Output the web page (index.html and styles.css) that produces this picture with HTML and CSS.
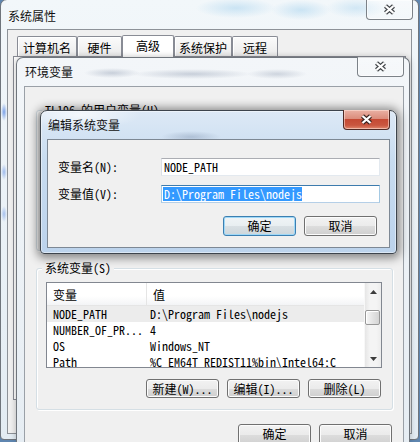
FILE: index.html
```html
<!DOCTYPE html>
<html lang="zh-CN">
<head>
<meta charset="utf-8">
<title>编辑系统变量</title>
<link rel="stylesheet" href="styles.css">
</head>
<body>
<div class="win outer">
  <div class="titlebar tb-outer"><span class="title">系统属性</span></div>
  <div class="close close-outer"><svg width="13" height="11" viewBox="0 0 13 11"><path d="M2.5 2L10.5 9M10.5 2L2.5 9" stroke="#404448" stroke-width="4.4"/><path d="M2.5 2L10.5 9M10.5 2L2.5 9" stroke="#fff" stroke-width="2.3"/></svg></div>
  <div class="oclient">
    <div class="tabs">
      <div class="tab w1">计算机名</div>
      <div class="tab w2">硬件</div>
      <div class="tab w3 sel">高级</div>
      <div class="tab w4">系统保护</div>
      <div class="tab w5">远程</div>
    </div>
    <div class="tabpanel"></div>
  </div>
</div>

<div class="win env">
  <div class="titlebar"><span class="title">环境变量</span></div>
  <div class="close close-env"><svg width="13" height="11" viewBox="0 0 13 11"><path d="M2.5 2L10.5 9M10.5 2L2.5 9" stroke="#404448" stroke-width="4.4"/><path d="M2.5 2L10.5 9M10.5 2L2.5 9" stroke="#fff" stroke-width="2.3"/></svg></div>
  <div class="eclient">
    <div class="group user">
      <span class="legend">TL196 的用户变量(U)</span>
    </div>
    <div class="group sys">
      <span class="legend">系统变量(S)</span>
      <div class="listview">
        <div class="lv-main">
          <div class="lv-head"><div class="h1">变量</div><div class="h2">值</div></div>
          <div class="lv-row sel"><div class="c1">NODE_PATH</div><div class="c2">D:\Program Files\nodejs</div></div>
          <div class="lv-row"><div class="c1">NUMBER_OF_PR...</div><div class="c2">4</div></div>
          <div class="lv-row"><div class="c1">OS</div><div class="c2">Windows_NT</div></div>
          <div class="lv-row"><div class="c1">Path</div><div class="c2">%C_EM64T_REDIST11%bin\Intel64;C</div></div>
        </div>
        <div class="vscroll">
          <div class="sb-btn"><svg width="7" height="4" viewBox="0 0 7 4"><path d="M3.5 0L7 4H0Z" fill="#3c3c3c"/></svg></div>
          <div class="sb-track"><div class="sb-thumb"></div></div>
          <div class="sb-btn"><svg width="7" height="4" viewBox="0 0 7 4"><path d="M0 0H7L3.5 4Z" fill="#3c3c3c"/></svg></div>
        </div>
      </div>
      <div class="btnrow">
        <div class="btn">新建(W)...</div>
        <div class="btn">编辑(I)...</div>
        <div class="btn">删除(L)</div>
      </div>
    </div>
    <div class="btnrow bottom">
      <div class="btn">确定</div>
      <div class="btn">取消</div>
    </div>
  </div>
</div>

<div class="win edit">
  <div class="titlebar"><span class="title">编辑系统变量</span></div>
  <div class="close close-red"><svg width="13" height="11" viewBox="0 0 13 11"><path d="M2.5 2L10.5 9M10.5 2L2.5 9" stroke="#3a2420" stroke-width="4.4"/><path d="M2.5 2L10.5 9M10.5 2L2.5 9" stroke="#fff" stroke-width="2.3"/></svg></div>
  <div class="dclient">
    <div class="form">
      <label class="lbl">变量名(N):</label>
      <div class="input">NODE_PATH</div>
      <label class="lbl">变量值(V):</label>
      <div class="input focus"><span class="selected">D:\Program Files\nodejs</span></div>
    </div>
    <div class="btnrow dlg">
      <div class="btn default">确定</div>
      <div class="btn">取消</div>
    </div>
  </div>
</div>
</body>
</html>
```

FILE: styles.css
```css
* { box-sizing: border-box; margin: 0; padding: 0; }
html, body { width: 420px; height: 442px; overflow: hidden; }
body {
  position: relative;
  background: #5f86b0;
  font-family: "Noto Sans Mono CJK SC", "Noto Sans CJK SC", "Liberation Mono", monospace;
  font-size: 12px;
  color: #000;
}

.win {
  position: absolute;
  border: 1px solid #6f757c;
  border-radius: 7px 7px 4px 4px;
}
.titlebar {
  height: 28px;
  padding-left: 1px;
  display: flex;
  align-items: center;
}
.title {
  font-family: "Noto Sans CJK SC", sans-serif;
  font-size: 12px;
  line-height: 14px;
  color: #111;
}

/* close buttons */
.close {
  position: absolute;
  top: -1px;
  width: 47px;
  height: 20px;
  border: 1px solid #7c8288;
  border-top: none;
  border-radius: 0 0 4px 4px;
  display: flex;
  align-items: center;
  justify-content: center;
  background: linear-gradient(rgba(255,255,255,.35), rgba(255,255,255,.15));
  box-shadow: inset 0 0 0 1px rgba(255,255,255,.6);
}
.close-outer { right: 5px; top: 0; }
.close-env { right: 5px; }
.close-red {
  right: 6px;
  border-color: #4f2a25;
  background: linear-gradient(#eab1a4 0%, #db8d7c 45%, #c54a34 50%, #c9563f 80%, #e0876d 100%);
  box-shadow: inset 0 0 0 1px rgba(255,230,220,.55);
}

/* outer window: 系统属性 */
.outer {
  left: 0; top: -1px; width: 419px; height: 441px;
  padding: 0 6px;
  background:
    radial-gradient(ellipse 3px 9px at 3px 112px, rgba(80,130,225,.75), transparent),
    radial-gradient(ellipse 3px 8px at 3px 172px, rgba(80,130,225,.5), transparent),
    radial-gradient(ellipse 3px 8px at 3px 214px, rgba(80,130,225,.45), transparent),
    radial-gradient(ellipse 40px 10px at 235px 8px, rgba(170,212,238,.55), transparent),
    radial-gradient(ellipse 30px 10px at 300px 10px, rgba(170,212,238,.55), transparent),
    radial-gradient(ellipse 30px 10px at 355px 8px, rgba(170,212,238,.45), transparent),
    linear-gradient(#f2f7fa, #e3ecf3);
}
.tb-outer { height: 29px; padding-top: 2px; }
.oclient {
  height: 405px;
  border: 1px solid #8d9298;
  background: #f0f0f0;
}
.tabs {
  height: 26px;
  margin-left: 9px;
  display: flex;
  align-items: flex-end;
}
.tab {
  height: 20px;
  border: 1px solid #898c95;
  border-bottom: none;
  border-radius: 2px 2px 0 0;
  background: linear-gradient(#fbfbfb, #ebebeb);
  box-shadow: inset 1px 1px 0 #fff;
  font-family: "Noto Sans CJK SC", sans-serif;
  font-size: 12px;
  line-height: 14px;
  padding-top: 4px;
  text-align: center;
}
.tab.sel { height: 22px; background: #fff; padding-top: 3px; margin-bottom: -1px; position: relative; }
.w1 { width: 60px; }
.w2 { width: 45px; }
.w3 { width: 52px; }
.w4 { width: 58px; }
.w5 { width: 46px; }
.tabpanel {
  margin: 0 5px;
  height: 344px;
  border: 1px solid #898c95;
  background: #fff;
}

/* env window: 环境变量 */
.env {
  left: 16px; top: 57px; width: 394px; height: 385px;
  border-radius: 7px 7px 0 0;
  border-bottom: none;
  padding: 0 5px 0 7px;
  background:
    radial-gradient(ellipse 28px 5px at 95px 15px, rgba(120,135,160,.35), transparent),
    radial-gradient(ellipse 60px 5px at 175px 16px, rgba(120,135,160,.35), transparent),
    radial-gradient(ellipse 30px 5px at 260px 16px, rgba(120,135,160,.3), transparent),
    linear-gradient(#f3f6f9, #e6edf3);
  box-shadow: 0 0 6px rgba(0,0,0,.25);
}
.eclient {
  height: 356px;
  border: 1px solid #9aa0a7;
  border-bottom: none;
  background: #f0f0f0;
  padding-left: 11px;
  overflow: hidden;
}
.group {
  position: relative;
  width: 357px;
  border: 1px solid #d5dfe5;
  border-radius: 3px;
  box-shadow: inset 1px 1px 0 #fff, 1px 1px 0 #fff;
}
.legend {
  position: absolute;
  top: -8px;
  left: 5px;
  padding: 0 3px;
  background: #f0f0f0;
  line-height: 14px;
  white-space: nowrap;
}
.user { margin-top: 23px; height: 141px; }
.sys { margin-top: 17px; height: 142px; padding: 13px 0 0 9px; }

.listview {
  width: 336px;
  height: 86px;
  border: 1px solid #828790;
  background: #fff;
  display: flex;
  overflow: hidden;
}
.lv-main { flex: 1; overflow: hidden; }
.lv-head {
  height: 23px;
  display: grid;
  grid-template-columns: 100px 1fr;
  background: linear-gradient(#fff 0%, #fff 60%, #f3f4f6 100%);
  border-bottom: 1px solid #e5e5e5;
}
.h1, .h2 { padding-top: 5px; line-height: 14px; }
.h1 { padding-left: 6px; border-right: 1px solid #e5e5e5; }
.h2 { padding-left: 6px; }
.lv-row {
  height: 16px;
  display: grid;
  grid-template-columns: 100px 1fr;
  line-height: 16px;
  white-space: nowrap;
}
.lv-row.sel { background: #ececec; }
.c1 { padding-left: 6px; overflow: hidden; }
.c2 { padding-left: 3px; overflow: hidden; }

.vscroll {
  width: 17px;
  display: flex;
  flex-direction: column;
  background: linear-gradient(90deg, #e6e6e6, #f4f4f4 30%, #f4f4f4 70%, #ececec);
  border-left: 1px solid #f8f8f8;
}
.sb-btn { height: 17px; display: flex; align-items: center; justify-content: center; }
.sb-track { flex: 1; padding-top: 10px; }
.sb-thumb {
  width: 15px;
  height: 15px;
  border: 1px solid #979797;
  border-radius: 2px;
  background: linear-gradient(90deg, #f6f6f6, #e4e4e4 50%, #d4d4d4);
  box-shadow: inset 1px 1px 0 #fff;
}

.btnrow {
  display: flex;
  justify-content: flex-end;
  gap: 8px;
}
.sys .btnrow { width: 335px; margin-top: 11px; }
.bottom { width: 356px; margin-top: 14px; }
.btn {
  width: 73px;
  height: 19px;
  border: 1px solid #707070;
  border-radius: 3px;
  background: linear-gradient(#f2f2f2 0%, #ebebeb 50%, #dddddd 50%, #cfcfcf 100%);
  box-shadow: inset 0 0 0 1px #fcfcfc;
  text-align: center;
  line-height: 17px;
  white-space: nowrap;
}
.bottom .btn { height: 22px; }

/* edit dialog: 编辑系统变量 */
.edit {
  left: 40px; top: 110px; width: 357px; height: 144px;
  padding: 0 6px;
  border-color: #3d444c;
  background:
    radial-gradient(ellipse 30px 6px at 150px 26px, rgba(110,130,160,.35), transparent),
    radial-gradient(ellipse 60px 14px at 40px 4px, rgba(255,255,255,.7), transparent),
    linear-gradient(#dde9f6 0%, #c8dcf0 35%, #bcd3ec 100%);
  box-shadow: 0 1px 10px 3px rgba(0,0,0,.45), inset 0 0 0 1px rgba(255,255,255,.45);
}
.dclient {
  height: 109px;
  border: 1px solid #7d8894;
  background: #f0f0f0;
}
.form {
  display: grid;
  grid-template-columns: 103px 219px;
  row-gap: 9px;
  padding: 18px 0 0 10px;
  align-items: center;
}
.lbl { line-height: 14px; }
.input {
  height: 18px;
  border: 1px solid #e3e9ef;
  border-top-color: #abadb3;
  border-left-color: #dbdfe6;
  background: #fff;
  padding-left: 2px;
  line-height: 16px;
  white-space: nowrap;
}
.input.focus {
  border-color: #b5cfe7;
  border-top-color: #3d7bad;
  border-left-color: #a4c9e3;
  border-right-color: #a4c9e3;
  padding-left: 1px;
}
.selected {
  display: inline-block;
  background: #3399ff;
  color: #fff;
  line-height: 14px;
  padding-left: 1px;
}
.dlg { margin-top: 13px; padding-right: 12px; }
.dlg .btn { height: 20px; line-height: 18px; }
.btn.default {
  border-color: #3c7fb1;
  box-shadow: inset 0 0 0 1px #9fd8f7;
  background: linear-gradient(#f0f4f6 0%, #e8eef1 50%, #d9e0e4 50%, #cdd6db 100%);
}
```
